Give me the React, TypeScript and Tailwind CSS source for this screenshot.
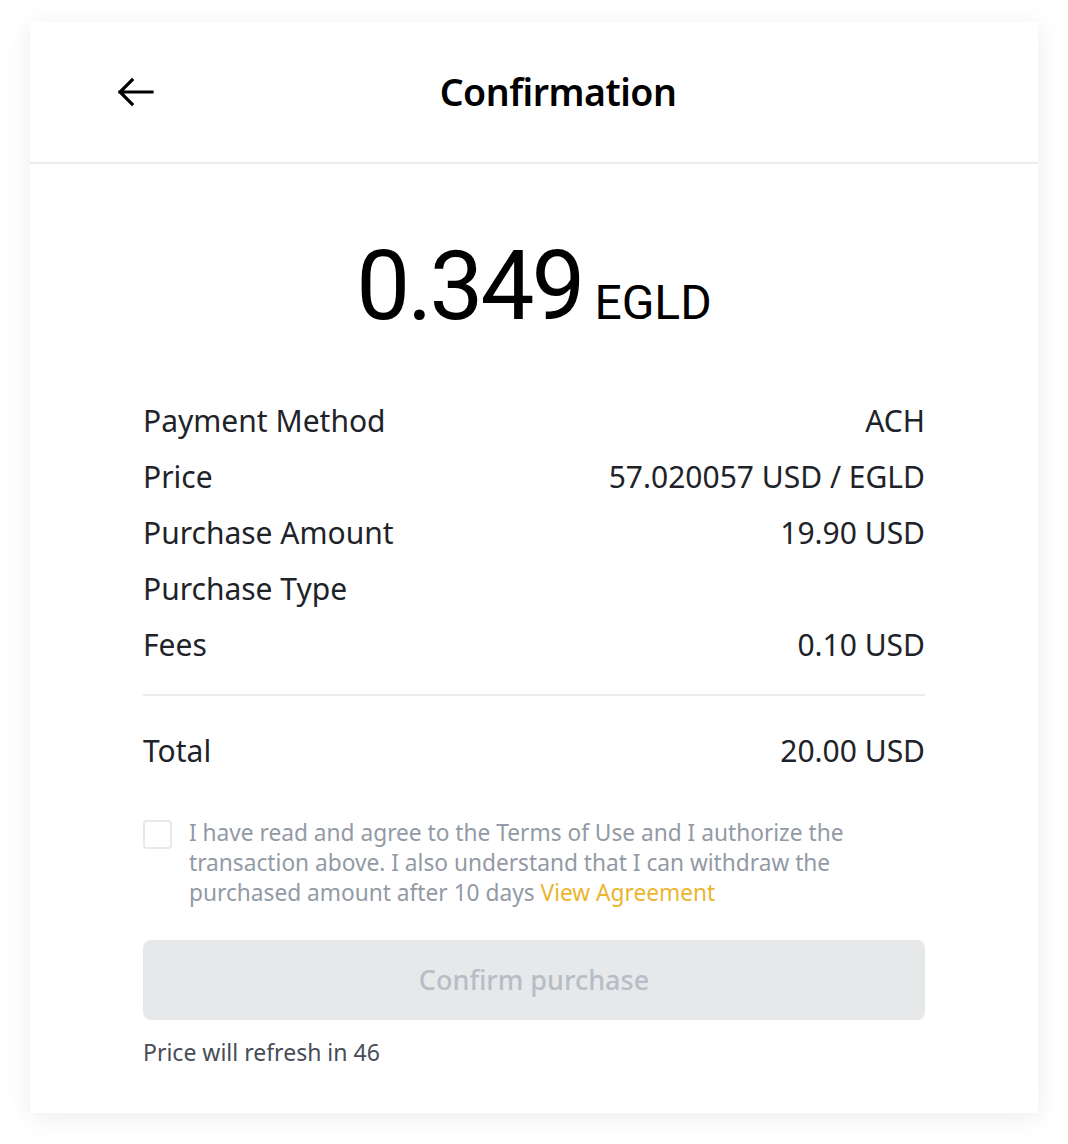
import React from 'react';

const rows = [
  { label: 'Payment Method', value: 'ACH' },
  { label: 'Price', value: '57.020057 USD / EGLD' },
  { label: 'Purchase Amount', value: '19.90 USD' },
  { label: 'Purchase Type', value: '' },
  { label: 'Fees', value: '0.10 USD' },
];

const BackArrow: React.FC = () => (
  <svg width="38" height="30" viewBox="0 0 38 30" fill="none">
    <path d="M3 15h32M15 3L3 15l12 12" stroke="#000" strokeWidth="3.2" strokeLinecap="square" />
  </svg>
);

export default function App() {
  return (
    <div className="min-h-[1144px] bg-white pt-[22px] pl-[30px] font-['Noto_Sans','Roboto',sans-serif]">
      <div className="w-[1008px] bg-white shadow-[0_4px_24px_rgba(0,0,0,0.08)]">
        <div className="flex h-[142px] items-center border-b-2 border-[#eaecef] px-[82px]">
          <button className="flex w-[48px] items-center justify-center">
            <BackArrow />
          </button>
          <h1 className="flex-1 text-center text-[37.5px] font-semibold tracking-[-0.5px] text-black">Confirmation</h1>
        </div>

        <div className="px-[113px] pt-[74px] pb-[43px]">
          <div className="flex items-baseline justify-center gap-[12px] font-['Roboto',sans-serif] text-black">
            <span className="text-[96px] leading-none tracking-[-3px]">0.349</span>
            <span className="text-[48px] leading-none">EGLD</span>
          </div>

          <div className="mt-[58px] flex flex-col">
            {rows.map((r) => (
              <div key={r.label} className="flex h-[56px] items-center justify-between text-[30px] text-[#1e2329]">
                <span>{r.label}</span>
                <span>{r.value}</span>
              </div>
            ))}
          </div>

          <div className="mt-[22px] h-[2px] bg-[#eaecef]" />

          <div className="flex h-[108px] items-center justify-between text-[30px] text-[#1e2329]">
            <span>Total</span>
            <span>20.00 USD</span>
          </div>

          <div className="mt-[14px] flex gap-[17px]">
            <div className="mt-[2px] h-[29px] w-[29px] shrink-0 rounded-[4px] border-2 border-[#e6e8ea]" />
            <p className="text-[22.7px] leading-[30px] text-[#929aa5]">
              I have read and agree to the Terms of Use and I authorize the transaction above. I also understand that I can withdraw the purchased amount after 10 days{' '}
              <span className="text-[#ebb52f]">View Agreement</span>
            </p>
          </div>

          <button className="mt-[32px] flex h-[80px] w-full items-center justify-center rounded-[8px] bg-[#e6e8ea] text-[27px] font-medium text-[#b7bdc6]">
            Confirm purchase
          </button>

          <p className="mt-[15px] text-[23px] text-[#474d57]">Price will refresh in 46</p>
        </div>
      </div>
    </div>
  );
}
